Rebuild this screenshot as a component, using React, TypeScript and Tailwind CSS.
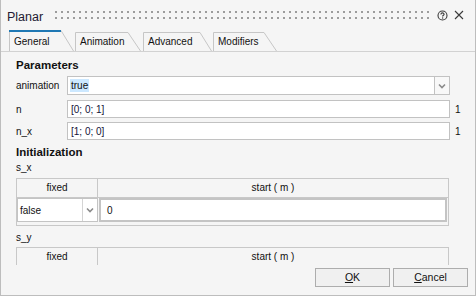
import React from "react";

function Chevron() {
  return (
    <svg width="8" height="6" viewBox="0 0 8 6">
      <path d="M1 1.5 L4 4.5 L7 1.5" fill="none" stroke="#8a8a8a" strokeWidth="1.6" />
    </svg>
  );
}

function Tab({
  label,
  width,
  top,
  active,
  ml,
}: {
  label: string;
  width: number;
  top: number;
  active?: boolean;
  ml: string;
}) {
  const h = active ? 21 : 19;
  return (
    <div
      className={`relative ${ml} ${active ? "h-[21px] bg-[#f5f5f5] z-10" : "h-[19px]"}`}
      style={{ width }}
    >
      <svg className="absolute left-0 top-0" width={width} height={h}>
        <path
          d={`M0.5 ${h} L0.5 0.5 L${top} 0.5 L${width - 0.5} ${h}`}
          fill="none"
          stroke="#c6c6c6"
          strokeWidth="1"
        />
        {active && <line x1="0" y1="1" x2={top} y2="1" stroke="#1f78b4" strokeWidth="2" />}
      </svg>
      <span className={`absolute left-[5px] text-[10px] leading-[12px] text-[#111] ${active ? "top-[6px]" : "top-[4px]"}`}>
        {label}
      </span>
    </div>
  );
}

function ValueTable({ clipped }: { clipped?: boolean }) {
  return (
    <div className={`w-[433px] border border-[#c8c8c8] ${clipped ? "border-b-0" : ""}`}>
      <div className="grid grid-cols-[81px_1fr] h-[18px] text-[10px] leading-[12px] text-[#111]">
        <div className="flex items-center justify-center border-r border-[#c8c8c8]">fixed</div>
        <div className="flex items-center justify-center">start ( m )</div>
      </div>
      {!clipped && (
        <div className="border-t border-[#c8c8c8] flex gap-[1px] pb-[3px] h-[28px]">
          <div className="flex w-[81px] h-[24px] border border-[#c4c4c4] bg-white">
            <div className="flex-1 flex items-center pl-[2px] text-[10px] text-[#111] border-r border-[#d4d4d4]">
              false
            </div>
            <div className="w-[14px] flex items-center justify-center">
              <Chevron />
            </div>
          </div>
          <div className="flex-1 mr-[1px] h-[24px] border-2 border-[#c4c4c4] bg-white flex items-center pl-[6px] text-[10px] text-[#111]">
            0
          </div>
        </div>
      )}
    </div>
  );
}

export default function App() {
  return (
    <div className="w-[476px] h-[296px] bg-[#f5f5f5] border-x border-b border-[#bdbdbd] flex flex-col overflow-hidden font-['Liberation_Sans',Arial,sans-serif] select-none">
      {/* title bar */}
      <div className="h-[31px] flex items-center shrink-0">
        <span className="ml-[6px] text-[12.5px] leading-[15px] text-[#241a33] mt-[4px]">Planar</span>
        <svg className="ml-[12px] mt-[-1px]" width="375" height="9">
          <defs>
            <pattern id="grip" width="6" height="6" patternUnits="userSpaceOnUse">
              <rect x="0" y="0" width="2" height="2" fill="#9c9c9c" />
            </pattern>
          </defs>
          <rect x="0" y="0" width="375" height="9" fill="url(#grip)" />
        </svg>
        <svg className="ml-[7px] mt-[-1px]" width="11" height="11" viewBox="0 0 11 11">
          <circle cx="5.5" cy="5.5" r="4.5" fill="none" stroke="#3a3a3a" strokeWidth="1.1" />
          <path d="M3.9 4.4 C3.9 3.4 4.6 2.9 5.5 2.9 C6.4 2.9 7.1 3.5 7.1 4.3 C7.1 5.2 5.6 5.4 5.6 6.6" fill="none" stroke="#3a3a3a" strokeWidth="1.1" />
          <rect x="5" y="7.4" width="1.2" height="1.2" fill="#3a3a3a" />
        </svg>
        <svg className="ml-[6px] mt-[-1px]" width="10" height="10" viewBox="0 0 10 10">
          <path d="M1 1 L9 9 M9 1 L1 9" stroke="#3a3a3a" strokeWidth="1.1" />
        </svg>
      </div>

      {/* tabs */}
      <div className="h-[21px] shrink-0 flex items-end border-b border-[#d2d2d2] relative">
        <Tab label="General" width={65} top={52} active ml="ml-[8px]" />
        <Tab label="Animation" width={66} top={53} ml="ml-[1px]" />
        <Tab label="Advanced" width={69} top={57} ml="ml-[2px]" />
        <Tab label="Modifiers" width={64} top={51} ml="ml-[1px]" />
      </div>

      {/* content */}
      <div className="h-[213px] shrink-0 overflow-hidden pl-[15px] text-[#111]">
        <div className="mt-[6px] h-[14px] text-[11.5px] leading-[14px] font-bold">Parameters</div>

        <div className="mt-[4px] h-[19px] flex items-center">
          <div className="w-[51px] text-[10px]">animation</div>
          <div className="w-[368px] h-[19px] border border-[#c2c2c2] bg-white flex items-center pl-[2px]">
            <span className="bg-[#cce8ff] px-[1px] text-[10px] leading-[13px]">true</span>
          </div>
          <div className="w-[15px] h-[19px] border border-[#c2c2c2] border-l-0 bg-[#f8f8f8] flex items-center justify-center">
            <Chevron />
          </div>
        </div>

        <div className="mt-[5px] h-[18px] flex items-center">
          <div className="w-[51px] text-[10px]">n</div>
          <div className="w-[383px] h-[18px] border border-[#c2c2c2] bg-white flex items-center pl-[3px] text-[10px] text-[#14143a]">
            [0; 0; 1]
          </div>
          <div className="ml-[5px] text-[10px]">1</div>
        </div>

        <div className="mt-[4px] h-[18px] flex items-center">
          <div className="w-[51px] text-[10px]">n_x</div>
          <div className="w-[383px] h-[18px] border border-[#c2c2c2] bg-white flex items-center pl-[3px] text-[10px] text-[#14143a]">
            [1; 0; 0]
          </div>
          <div className="ml-[5px] text-[10px]">1</div>
        </div>

        <div className="mt-[5px] h-[14px] text-[11.5px] leading-[14px] font-bold">Initialization</div>
        <div className="mt-[2px] h-[14px] text-[10px] leading-[14px]">s_x</div>
        <div className="mt-[3px]">
          <ValueTable />
        </div>
        <div className="mt-[5px] h-[14px] text-[10px] leading-[14px]">s_y</div>
        <div className="mt-[2px]">
          <ValueTable clipped />
        </div>
      </div>

      {/* buttons */}
      <div className="flex-1 flex justify-end items-start pt-[3px] pr-[7px] gap-[3px]">
        <button className="w-[75px] h-[19px] border border-[#adadad] bg-[#f0f0f0] text-[10.5px] text-[#111] flex items-center justify-center">
          <span><span className="underline">O</span>K</span>
        </button>
        <button className="w-[75px] h-[19px] border border-[#adadad] bg-[#f0f0f0] text-[10.5px] text-[#111] flex items-center justify-center">
          <span><span className="underline">C</span>ancel</span>
        </button>
      </div>
    </div>
  );
}
